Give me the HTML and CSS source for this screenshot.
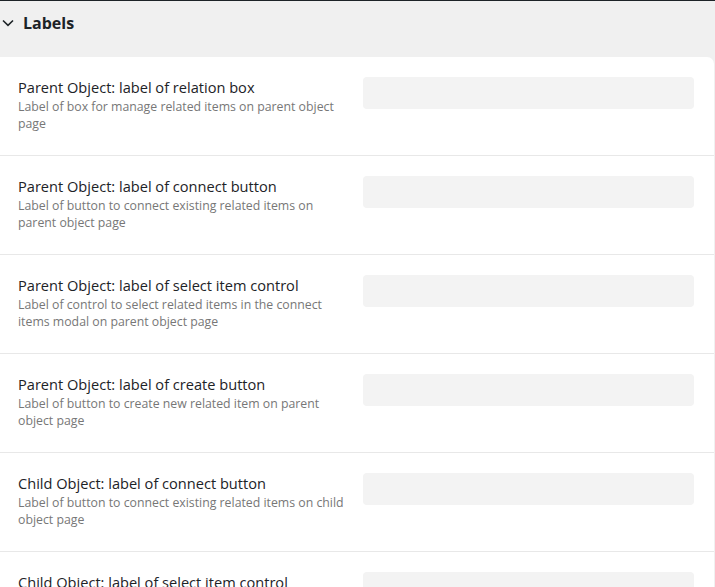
FILE: index.html
```html
<!DOCTYPE html>
<html lang="en">
<head>
<meta charset="UTF-8" />
<meta name="viewport" content="width=device-width, initial-scale=1" />
<title>Labels</title>
<link rel="stylesheet" href="styles.css">
</head>
<body>

<div class="topline"></div>

<section class="panel">
  <h2 class="panel-head">
    <svg class="chevron" width="12" height="8" viewBox="0 0 12 8"><path d="M1 1.5 L6 6.3 L11 1.5" fill="none" stroke="#1d2327" stroke-width="1.6"/></svg>
    Labels
  </h2>

  <div class="card">
    <div class="row">
      <div class="info">
        <div class="title">Parent Object: label of relation box</div>
        <div class="desc">Label of box for manage related items on parent object page</div>
      </div>
      <input type="text" class="field" />
    </div>
    <div class="row">
      <div class="info">
        <div class="title">Parent Object: label of connect button</div>
        <div class="desc">Label of button to connect existing related items on parent object page</div>
      </div>
      <input type="text" class="field" />
    </div>
    <div class="row">
      <div class="info">
        <div class="title">Parent Object: label of select item control</div>
        <div class="desc">Label of control to select related items in the connect items modal on parent object page</div>
      </div>
      <input type="text" class="field" />
    </div>
    <div class="row">
      <div class="info">
        <div class="title">Parent Object: label of create button</div>
        <div class="desc">Label of button to create new related item on parent object page</div>
      </div>
      <input type="text" class="field" />
    </div>
    <div class="row">
      <div class="info">
        <div class="title">Child Object: label of connect button</div>
        <div class="desc">Label of button to connect existing related items on child object page</div>
      </div>
      <input type="text" class="field" />
    </div>
    <div class="row">
      <div class="info">
        <div class="title">Child Object: label of select item control</div>
        <div class="desc">Label of control to select related items in the connect items modal on child object page</div>
      </div>
      <input type="text" class="field" />
    </div>
  </div>
</section>

</body>
</html>
```

FILE: styles.css
```css
body {
  margin: 0;
  padding: 0;
  font-family: "Open Sans", "Noto Sans", sans-serif;
  background: #f0f0f0;
  color: #1d2327;
  overflow: hidden;
}
.topline {
  height: 1px;
  background: #1d2327;
}
.panel-head {
  display: flex;
  align-items: center;
  gap: 9px;
  height: 44px;
  margin: 0;
  padding: 0 0 12px 2px;
  font-size: 16px;
  font-weight: 700;
}
.chevron {
  flex: none;
}
.card {
  background: white;
  margin-right: 1px;
  border-radius: 0 7px 0 0;
}
.row {
  display: flex;
  align-items: flex-start;
  gap: 17px;
  height: 99px;
  box-sizing: border-box;
  padding: 20px 20px 0 18px;
  border-bottom: 1px solid #e8e8e8;
}
.info {
  width: 328px;
  flex: none;
}
.title {
  font-size: 14.6px;
  line-height: 20px;
}
.desc {
  padding-top: 1px;
  font-size: 12.3px;
  line-height: 17px;
  color: #777;
}
.field {
  flex: 1;
  height: 32px;
  box-sizing: border-box;
  border: none;
  border-radius: 4px;
  background: #f3f3f3;
}
```
